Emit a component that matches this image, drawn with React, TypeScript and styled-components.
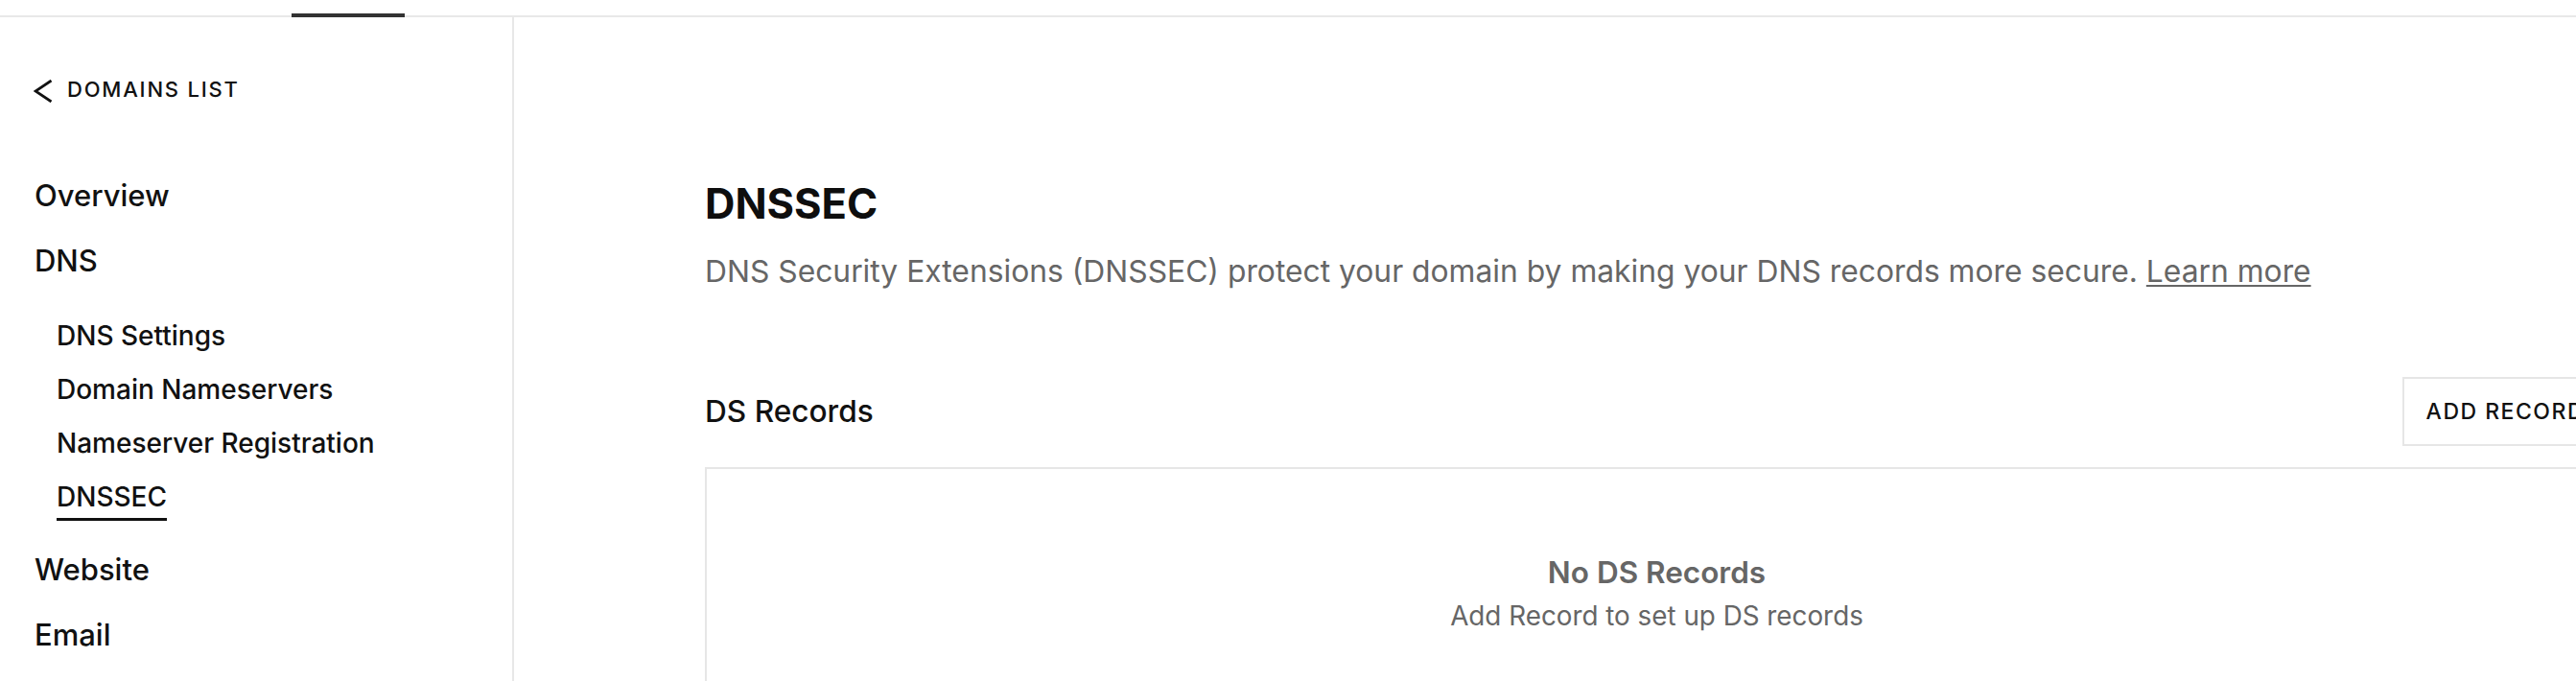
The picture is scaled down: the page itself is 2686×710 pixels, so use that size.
import React from "react";
import styled, { createGlobalStyle } from "styled-components";

const GlobalStyle = createGlobalStyle`
  html, body {
    margin: 0;
    padding: 0;
    background: #ffffff;
    overflow: hidden;
  }
  body {
    font-family: "Inter", "Noto Sans", Arial, sans-serif;
    color: #111111;
    -webkit-font-smoothing: antialiased;
  }
  * { box-sizing: border-box; }
`;

const Page = styled.div`
  width: 100vw;
  height: 100vh;
  overflow: hidden;
  display: flex;
  flex-direction: column;
`;

const TopBar = styled.div`
  flex: 0 0 auto;
  height: 18px;
  display: flex;
  align-items: flex-end;
  border-bottom: 2px solid #e8e8e8;
`;

const TabIndicator = styled.div`
  margin-left: 304px;
  width: 118px;
  height: 4px;
  margin-bottom: -2px;
  background: #333333;
`;

const Body = styled.div`
  flex: 1 1 auto;
  display: flex;
  min-height: 0;
`;

const Sidebar = styled.nav`
  flex: 0 0 536px;
  border-right: 2px solid #e8e8e8;
  padding: 63px 0 0 35px;
  display: flex;
  flex-direction: column;
`;

const BackLink = styled.a`
  display: flex;
  align-items: center;
  gap: 15px;
  height: 24px;
  color: #111111;
  text-decoration: none;
  font-size: 22px;
  line-height: 24px;
  font-weight: 500;
  letter-spacing: 1.8px;
  text-transform: uppercase;
  svg {
    flex: 0 0 auto;
    margin-top: 4px;
  }
`;

const NavList = styled.ul`
  list-style: none;
  margin: 79px 0 0 0;
  padding: 0 0 0 1px;
  display: flex;
  flex-direction: column;
`;

const MainItem = styled.li<{ $gap: number }>`
  margin-top: ${(p) => p.$gap}px;
  font-size: 31px;
  line-height: 40px;
  font-weight: 500;
  color: #111111;
`;

const SubList = styled.ul`
  list-style: none;
  margin: 40px 0 0 0;
  padding: 0 0 0 23px;
  display: flex;
  flex-direction: column;
  gap: 20px;
`;

const SubItem = styled.li`
  font-size: 28px;
  line-height: 36px;
  font-weight: 500;
  color: #111111;
`;

const ActiveLabel = styled.span`
  display: inline-block;
  padding-bottom: 4px;
  border-bottom: 3px solid #111111;
`;

const Main = styled.main`
  flex: 0 0 auto;
  width: 2184px;
  padding: 168px 0 0 199px;
`;

const Content = styled.div`
  width: 1985px;
  display: flex;
  flex-direction: column;
`;

const Title = styled.h1`
  margin: 0;
  font-size: 43.5px;
  line-height: 52px;
  font-weight: 700;
  color: #0e0e0e;
`;

const Description = styled.p`
  margin: 23px 0 0 0;
  font-size: 31.8px;
  line-height: 44px;
  font-weight: 400;
  color: #666666;
  white-space: nowrap;
`;

const LearnMore = styled.a`
  color: #666666;
  text-decoration: underline;
  text-decoration-thickness: 2px;
  text-underline-offset: 3px;
`;

const SectionHeader = styled.div`
  margin-top: 88px;
  display: flex;
  align-items: center;
  justify-content: space-between;
`;

const SectionTitle = styled.h2`
  margin: 0;
  font-size: 31.6px;
  line-height: 44px;
  font-weight: 500;
  color: #111111;
`;

const OutlineButton = styled.button`
  height: 72px;
  padding: 0 23px;
  border: 2px solid #e6e6e6;
  background: #ffffff;
  font-family: inherit;
  font-size: 23px;
  font-weight: 500;
  letter-spacing: 1.5px;
  color: #111111;
  text-transform: uppercase;
  cursor: pointer;
`;

const EmptyBox = styled.div`
  margin-top: 22px;
  border: 2px solid #e6e6e6;
  padding: 88px 0 88px 0;
  display: flex;
  flex-direction: column;
  align-items: center;
`;

const EmptyTitle = styled.div`
  font-size: 31.5px;
  line-height: 40px;
  font-weight: 600;
  color: #666666;
`;

const EmptyText = styled.div`
  margin-top: 7px;
  font-size: 27.8px;
  line-height: 36px;
  font-weight: 400;
  color: #666666;
`;

const ChevronLeft = () => (
  <svg width="20" height="24" viewBox="0 0 20 24" fill="none" aria-hidden="true">
    <polyline points="18.5,1 2,12 18.5,23" stroke="#111111" strokeWidth="2.8" strokeLinejoin="miter" />
  </svg>
);

const subItems = ["DNS Settings", "Domain Nameservers", "Nameserver Registration", "DNSSEC"];

export default function App() {
  return (
    <>
      <GlobalStyle />
      <Page>
        <TopBar>
          <TabIndicator />
        </TopBar>
        <Body>
          <Sidebar>
            <BackLink href="#">
              <ChevronLeft />
              <span>Domains List</span>
            </BackLink>
            <NavList>
              <MainItem $gap={0}>Overview</MainItem>
              <MainItem $gap={28}>
                DNS
                <SubList>
                  {subItems.map((s) => (
                    <SubItem key={s}>{s === "DNSSEC" ? <ActiveLabel>{s}</ActiveLabel> : s}</SubItem>
                  ))}
                </SubList>
              </MainItem>
              <MainItem $gap={31}>Website</MainItem>
              <MainItem $gap={28}>Email</MainItem>
            </NavList>
          </Sidebar>
          <Main>
            <Content>
              <Title>DNSSEC</Title>
              <Description>
                DNS Security Extensions (DNSSEC) protect your domain by making your DNS records more secure.{" "}
                <LearnMore href="#">Learn more</LearnMore>
              </Description>
              <SectionHeader>
                <SectionTitle>DS Records</SectionTitle>
                <OutlineButton>Add Record</OutlineButton>
              </SectionHeader>
              <EmptyBox>
                <EmptyTitle>No DS Records</EmptyTitle>
                <EmptyText>Add Record to set up DS records</EmptyText>
              </EmptyBox>
            </Content>
          </Main>
        </Body>
      </Page>
    </>
  );
}
